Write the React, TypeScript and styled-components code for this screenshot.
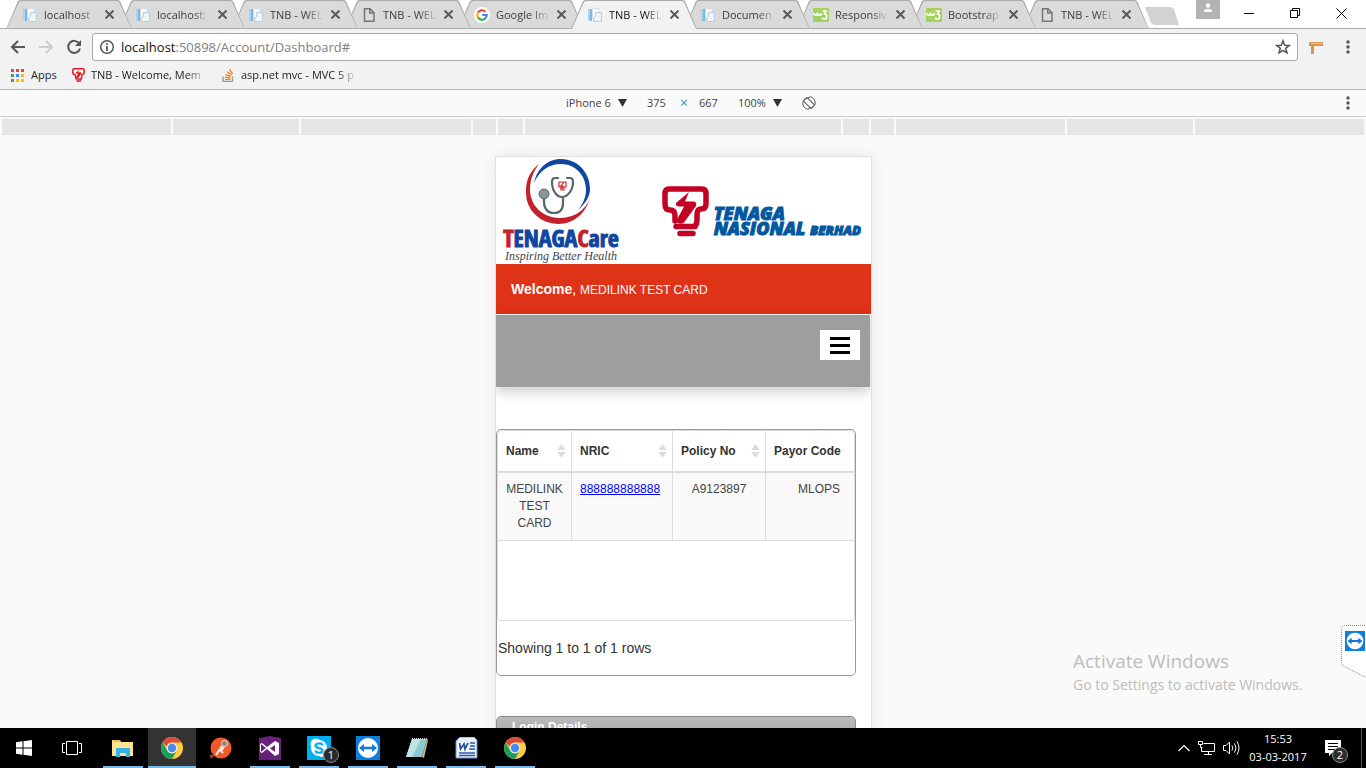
import React from "react";
import styled, { createGlobalStyle, css } from "styled-components";

const GlobalStyle = createGlobalStyle`
  * { box-sizing: border-box; }
  body { margin: 0; font-family: "Liberation Sans", Arial, sans-serif; overflow: hidden; }
  button, input, select { font: inherit; color: inherit; background: none; border: 0; padding: 0; margin: 0; }
  svg { display: block; flex: none; }
`;

const ui = `"Open Sans", "Noto Sans", sans-serif`;

const Desktop = styled.div`
  display: flex;
  flex-direction: column;
  height: 100vh;
  background: #fff;
  position: relative;
`;

/* ---------- tab strip ---------- */
const TabStrip = styled.header`
  display: flex;
  flex: none;
  height: 29px;
  padding-left: 19px;
  border-bottom: 1px solid #ababab;
  font: 12px/29px ${ui};
`;

const Tab = styled.div<{ $active?: boolean; $order: number }>`
  display: flex;
  align-items: center;
  gap: 6px;
  flex: 0 1 126px;
  min-width: 0;
  height: 29px;
  margin-left: -13px;
  padding: 0 18px 0 16px;
  position: relative;
  isolation: isolate;
  z-index: ${(p) => (p.$active ? 20 : 10 - p.$order)};
  color: ${(p) => (p.$active ? "#111" : "#3c3c3c")};
  &::before,
  &::after {
    content: "";
    position: absolute;
    inset: 0;
    z-index: -1;
    clip-path: polygon(0 100%, 12px 1px, 14px 0, calc(100% - 14px) 0, calc(100% - 12px) 1px, 100% 100%);
    background: #ababab;
  }
  &::after {
    inset: 1px 1px ${(p) => (p.$active ? "0" : "1px")} 1px;
    background: ${(p) => (p.$active ? "#f2f2f2" : "#dadada")};
  }
`;

const TabTitle = styled.button`
  flex: 1;
  min-width: 0;
  overflow: hidden;
  white-space: nowrap;
  text-align: left;
  font-size: 11px;
  line-height: 28px;
  mask-image: linear-gradient(to right, #000 36px, transparent 54px);
`;

const IconButton = styled.button<{ $w: number; $h?: number }>`
  display: flex;
  flex: none;
  align-items: center;
  justify-content: center;
  width: ${(p) => p.$w}px;
  height: ${(p) => p.$h ?? p.$w}px;
`;

const NewTab = styled.button`
  width: 34px;
  height: 18px;
  margin: 7px 0 0 -4px;
  background: #d2d2d2;
  clip-path: polygon(0 0, 26px 0, 29px 2px, 100% 100%, 9px 100%, 6px 16px);
`;

const WindowControls = styled.div`
  display: flex;
  margin-left: auto;
  padding-right: 2px;
`;

const Person = styled.button`
  display: flex;
  justify-content: center;
  width: 24px;
  height: 19px;
  margin-right: 6px;
  padding-top: 3px;
  background: #b3b3b3;
`;

/* ---------- address and bookmarks ---------- */
const Toolbar = styled.div`
  display: flex;
  align-items: center;
  flex: none;
  height: 36px;
  padding: 0 8px;
  background: #f2f2f2;
  color: #555;
`;

const Omnibox = styled.form`
  display: flex;
  align-items: center;
  flex: 1;
  height: 28px;
  margin: 0 8px;
  padding: 0 6px;
  gap: 6px;
  background: #fff;
  border: 1px solid #a9a9a9;
  border-radius: 3px;
`;

const Address = styled.span`
  flex: 1;
  font: 13px/20px ${ui};
  color: #808080;
  white-space: nowrap;
  b { font-weight: 400; color: #111; }
`;

const MenuButton = styled(IconButton)`
  margin-left: 12px;
`;

const Bookmarks = styled.nav`
  display: flex;
  flex: none;
  height: 25px;
  padding-left: 10px;
  background: #f2f2f2;
  border-bottom: 1px solid #b5b5b5;
`;

const Bookmark = styled.a<{ $w: number; $fade?: boolean }>`
  display: flex;
  align-items: center;
  gap: 6px;
  width: ${(p) => p.$w}px;
  height: 20px;
  color: #222;
  font: 11px/20px ${ui};
  text-decoration: none;
  white-space: nowrap;
  span {
    overflow: hidden;
    ${(p) => p.$fade && css`flex: 0 0 116px; mask-image: linear-gradient(to right, #000 96px, transparent);`}
  }
`;

/* ---------- device toolbar ---------- */
const DeviceBar = styled.div`
  display: grid;
  grid-template-columns: 1fr auto 1fr;
  align-items: center;
  flex: none;
  height: 27px;
  background: #fafafa;
  border-bottom: 1px solid #ccc;
  color: #444;
  font: 12px/26px ${ui};
`;

const DeviceControls = styled.div`
  display: flex;
  grid-column: 2;
  align-items: center;
  padding-left: 16px;
`;

const Picker = styled.label<{ $w: number }>`
  display: flex;
  align-items: center;
  width: ${(p) => p.$w}px;
  margin-right: 20px;
  font-size: 11px;
  select {
    flex: 1;
    min-width: 0;
    appearance: none;
  }
  &::after {
    content: "";
    width: 9px;
    height: 8px;
    background: #333;
    clip-path: polygon(0 0, 100% 0, 50% 100%);
  }
`;

const Dimension = styled.input`
  width: 22px;
  font-size: 11px;
`;

const Times = styled.span`
  width: 30px;
  text-align: center;
  color: #4a86c0;
  font-size: 14px;
`;

const Gap = styled.span`
  width: 17px;
`;

const KebabSlot = styled.div`
  display: flex;
  justify-content: flex-end;
  padding-right: 10px;
`;

const Ruler = styled.div`
  display: flex;
  flex: none;
  gap: 2px;
  height: 18px;
  padding: 2px 2px 0;
  background: #fafafa;
`;

const Mark = styled.div<{ $w?: number }>`
  ${(p) => (p.$w ? css`flex: none; width: ${p.$w}px;` : css`flex: 1;`)}
  background: #e5e5e5;
`;

/* ---------- emulated page ---------- */
const Stage = styled.main`
  display: flex;
  justify-content: center;
  flex: 1;
  min-height: 0;
  overflow: hidden;
  padding: 21px 0 0 1px;
  background: #fafafa;
`;

const Phone = styled.div`
  width: 377px;
  height: 669px;
  flex: none;
  overflow: hidden;
  background: #fff;
  border: 1px solid #e0e0e0;
  box-shadow: 0 0 16px rgba(0, 0, 0, 0.08);
`;

const BrandRow = styled.div`
  display: flex;
  justify-content: space-between;
  height: 107px;
  padding: 2px 10px 0 7px;
`;

const CareBrand = styled.div`
  display: flex;
  flex-direction: column;
  align-items: center;
  width: 116px;
  white-space: nowrap;
  > svg { margin-right: 4px; }
`;

const CareName = styled.div`
  color: #1146a0;
  font: 900 24px/25px "Open Sans Condensed", "Liberation Sans Narrow", "Liberation Sans", sans-serif;
  -webkit-text-stroke: 1px #1146a0;
  em { font-style: normal; color: #c4222a; -webkit-text-stroke-color: #c4222a; }
`;

const Tagline = styled.div`
  color: #444;
  font: italic 12px/13px "Liberation Serif", serif;
`;

const TnbBrand = styled.div`
  display: flex;
  gap: 5px;
  padding-top: 27px;
`;

const TnbName = styled.div`
  padding-top: 20px;
  color: #0058a0;
  font: italic 800 18px/15px "Open Sans", sans-serif;
  -webkit-text-stroke: 1px #0058a0;
  white-space: nowrap;
  small { font-size: 13px; }
`;

const Welcome = styled.div`
  height: 50px;
  padding: 0 15px;
  background: #df3317;
  color: #fff;
  font-size: 12px;
  line-height: 50px;
  b, span { font-size: 14px; }
`;

const MenuBar = styled.div`
  display: flex;
  justify-content: flex-end;
  align-items: flex-start;
  height: 72px;
  margin: 1px 1px 0 0;
  padding: 15px 10px;
  background: #9e9e9e;
  box-shadow: 0 4px 12px rgba(0, 0, 0, 0.22);
`;

const Burger = styled.button`
  display: flex;
  flex-direction: column;
  align-items: center;
  justify-content: center;
  gap: 4px;
  width: 40px;
  height: 30px;
  background: #fff;
  i { width: 20px; height: 3px; background: #000; }
`;

const Panel = styled.section`
  height: 247px;
  margin: 42px 15px 40px 0;
  border: 1px solid #999;
  border-radius: 5px;
`;

const TableFrame = styled.div`
  height: 191px;
  border: 1px solid #ddd;
  border-radius: 4px;
  overflow: hidden;
`;

const Grid = styled.table`
  width: 100%;
  table-layout: fixed;
  border-collapse: separate;
  border-spacing: 0;
  color: #444;
  font-size: 12px;
  line-height: 17px;
`;

const Cell = styled.td<{ $align?: string }>`
  height: 68px;
  padding: 8px 8px 6px;
  vertical-align: top;
  text-align: ${(p) => p.$align ?? "center"};
  background: #f9f9f9;
  border-bottom: 1px solid #ddd;
  &:not(:last-child) { border-right: 1px solid #ddd; }
  &:last-child { padding-right: 14px; }
  a { color: #00f; }
`;

const HeadCell = styled.th`
  height: 42px;
  padding: 0 5px 0 8px;
  text-align: left;
  color: #333;
  white-space: nowrap;
  border-bottom: 2px solid #ddd;
  &:not(:last-child) { border-right: 1px solid #ddd; }
  div { display: flex; align-items: center; justify-content: space-between; }
`;

const RowCount = styled.p`
  margin: 17px 0 0 1px;
  color: #333;
  font-size: 14px;
  line-height: 20px;
`;

const LoginHead = styled.h2`
  height: 36px;
  margin: 0 15px 0 0;
  padding: 0 15px;
  border: 1px solid #8a8a8a;
  border-radius: 5px 5px 0 0;
  background: linear-gradient(#bbb, #999 30px);
  color: #fff;
  font-size: 12px;
  line-height: 21px;
`;

/* ---------- overlays ---------- */
const Watermark = styled.aside`
  position: absolute;
  right: 57px;
  bottom: 72px;
  width: 236px;
  color: #bdbdbd;
  font: 14px/22px ${ui};
  white-space: nowrap;
  strong { display: block; font-weight: 400; font-size: 19px; line-height: 25px; }
`;

const SideTab = styled.button`
  position: absolute;
  right: 0;
  top: 625px;
`;

/* ---------- taskbar ---------- */
const Taskbar = styled.footer`
  display: flex;
  flex: none;
  height: 40px;
  background: #000;
  color: #fff;
`;

const Task = styled.button<{ $state?: "open" | "active" }>`
  display: flex;
  align-items: center;
  justify-content: center;
  position: relative;
  width: 48px;
  height: 40px;
  margin-right: 1px;
  background: ${(p) => (p.$state === "active" ? "#333" : "#000")};
  ${(p) =>
    p.$state &&
    css`
      &::after {
        content: "";
        position: absolute;
        bottom: 0;
        left: ${p.$state === "active" ? 0 : 4}px;
        right: ${p.$state === "active" ? 0 : 4}px;
        height: 2px;
        background: #76b9ed;
      }
    `}
`;

const SystemButtons = styled.div`
  display: flex;
  width: 99px;
  ${Task} { margin: 0; }
`;

const Badge = styled.span<{ $right: number }>`
  position: absolute;
  right: ${(p) => p.$right}px;
  bottom: 5px;
  width: 16px;
  height: 16px;
  border: 1px solid #8c8c8c;
  border-radius: 8px;
  background: #2b2b2b;
  font: 11px/14px ${ui};
  text-align: center;
`;

const Tray = styled.div`
  display: flex;
  align-items: center;
  margin-left: auto;
  > svg { margin-right: 8px; }
`;

const Clock = styled.time`
  font: 11px/18px ${ui};
  text-align: center;
  width: 60px;
  white-space: nowrap;
`;

const Notifications = styled(Task)`
  width: 54px;
  margin-right: 4px;
  padding-right: 3px;
  border-right: 1px solid #555;
`;

/* ---------- drawings ---------- */
const DocsIcon = () => (
  <svg width="16" height="16" viewBox="0 0 16 16">
    <path d="M1 2h4v12H1z" fill="#7ab8e0" /><path d="M1 2h2v12H1z" fill="#a9d3ee" />
    <path d="M5.500 1.500h6.500v10H5.500z" fill="#f6f8fb" stroke="#d5dce5" />
    <path d="M8.500 5.500h6v9h-8v-4h2z" fill="#e9eef5" stroke="#c3ccd8" />
    <path d="M9.500 8h4M8 10.500h5.500M8 12.500h5" stroke="#fff" />
  </svg>
);
const PageIcon = () => (
  <svg width="16" height="16" viewBox="0 0 16 16" fill="none" stroke="#757575" strokeWidth="1.500">
    <path d="M3.500 1.800h5.500l4 4v8.400H3.500z" /><path d="M8.800 2v4h4" />
  </svg>
);
const GoogleIcon = () => (
  <svg width="16" height="16" viewBox="0 0 16 16" fill="none" strokeWidth="2.200">
    <circle cx="8" cy="8" r="8" fill="#fff" />
    <path d="M11.400 4.700A4.800 4.800 0 0 0 3.800 5.700" stroke="#ea4335" />
    <path d="M3.800 5.700a4.800 4.800 0 0 0 0 4.600" stroke="#fbbc05" />
    <path d="M3.800 10.300a4.800 4.800 0 0 0 7.300 1.300" stroke="#34a853" />
    <path d="M11.100 11.600A4.800 4.800 0 0 0 12.700 8H8.200" stroke="#4285f4" />
  </svg>
);
const W3Icon = () => (
  <svg width="16" height="16" viewBox="0 0 16 16" fill="none" stroke="#fff" strokeWidth="1.600" strokeLinejoin="round">
    <rect width="16" height="14" y="1" rx="1" fill="#a4d15f" stroke="none" />
    <path d="M1 6c0 3 3 3 3.500 0 .5 3 3.500 3 4 0" />
    <path d="M9.500 4h4l-2.200 3c3.200 0 3.200 5 0 5-1 0-1.800-.5-2-1.300" />
  </svg>
);
const Bulb = ({ w, h, color = "#c40024" }: { w: number; h: number; color?: string }) => (
  <svg width={w} height={h} viewBox="0 0 47 51">
    <path d="M33 40q2-2 2-6v-5q0-6 4-6 5 0 5-5V8q0-5-4-5H7Q3 3 3 8v10q0 6 5 6 5 0 5 6v5" fill="#fff" stroke={color} strokeWidth="5.500" strokeLinecap="round" />
    <path d="M27 6 14 17q-1 3 3 3.500h5l-8 15q4 4 8 1L34 20q1-4-2-4.500h-9z" fill={color} />
    <path d="M14 40.500h19M18 47.500h13" stroke={color} strokeWidth="5.500" strokeLinecap="round" />
  </svg>
);
const CareEmblem = () => (
  <svg width="68" height="66" viewBox="0 0 68 66">
    <path d="M14 5A34 34 0 0 0 1 33a32 31 0 0 0 32 32c17 0 31-13 33-32a31 27 0 0 1-31 26C18 59 5 47 5 30c0-9 3-17 9-25z" fill="#c4222a" />
    <path d="M9 24C12 10 22 0 36 0c17 0 29 14 29 30 0 8-5 15-12 21 5-6 8-13 8-20C61 16 50 5 36 5 24 5 14 12 9 24z" fill="#1146a0" />
    <path d="M33 19h-3q-3 0-3 4c0 9 5 15 10 15s11-6 11-15q0-4-3-4h-3M38 38v6c0 6-3 10-9 10s-10-4-10-11v-3" fill="none" stroke="#56686c" strokeWidth="2.200" strokeLinecap="round" />
    <circle cx="19" cy="35" r="5" fill="#8b9496" stroke="#56686c" />
    <path d="M34 23h7v5h-2v3h-3v-3h-2zM39 23l-3 4h2l-1 3" fill="#fff" stroke="#d42632" strokeWidth="1.200" />
  </svg>
);
const CloseX = ({ size = 9, w = 2, color = "#5a5a5a" }) => (
  <svg width={size} height={size} viewBox={`0 0 ${size} ${size}`} stroke={color} strokeWidth={w}>
    <path d={`M.5.5 ${size - 0.5} ${size - 0.5}M${size - 0.5}.5.5 ${size - 0.5}`} />
  </svg>
);
const Kebab = () => (
  <svg width="4" height="14" fill="#555"><circle cx="2" cy="2" r="1.700" /><circle cx="2" cy="7" r="1.700" /><circle cx="2" cy="12" r="1.700" /></svg>
);
const SortIcon = () => (
  <svg width="9" height="16" fill="#dcdcdc"><path d="M4.500 1 8.800 7H.2zM.2 9h8.600L4.500 15z" /></svg>
);
const Chrome = () => (
  <svg width="22" height="22" viewBox="0 0 22 22">
    <circle cx="11" cy="11" r="11" fill="#ffcd40" />
    <path d="M1.500 5.500A11 11 0 0 1 20.500 5.500H11a5.500 5.500 0 0 0-5.300 4z" fill="#dd4b3e" />
    <path d="M1.500 5.500A11 11 0 0 0 11 22l4.700-8.200A5.500 5.500 0 0 1 6.300 13.800z" fill="#19a05e" />
    <circle cx="11" cy="11" r="5.300" fill="#f1f1f1" /><circle cx="11" cy="11" r="4.200" fill="#4989f4" />
  </svg>
);
const TeamViewer = ({ size = 24 }) => (
  <svg width={size} height={size} viewBox="0 0 24 24">
    <path d="M0 0h24v24H0z" fill="#0e7fe0" /><circle cx="12" cy="12" r="10" fill="#fff" />
    <path d="m3 12 5-4v2.700h8V8l5 4-5 4v-2.700H8V16z" fill="#1277d6" />
  </svg>
);
const StackIcon = () => (
  <svg width="13" height="14" viewBox="0 0 13 14" fill="none" strokeWidth="1.300">
    <path d="M1 8.500v4.800h9.500V8.500" stroke="#999" />
    <path d="M3 11.300h5.500M3 9.200l5.500.6M3.500 6.600l5.300 1.700M5 3.800l4.600 3.100M7.500 1.300l3.200 4.500" stroke="#f48024" />
  </svg>
);

const pages = [
  ["localhost", DocsIcon], ["localhost:", DocsIcon], ["TNB - WEL", DocsIcon], ["TNB - WEL", PageIcon],
  ["Google Im", GoogleIcon], ["TNB - WEL", DocsIcon], ["Documen", DocsIcon], ["Responsiv", W3Icon],
  ["Bootstrap", W3Icon], ["TNB - WEL", PageIcon],
] as const;

const appColors = ["#ea4335", "#ea4335", "#ea4335", "#34a853", "#4285f4", "#fbbc05", "#34a853", "#fbbc05", "#fbbc05"];
const rulerMarks = [0, 126, 170, 23, 25, 316, 26, 23, 169, 126, 0];

export default function App() {
  return (
    <Desktop>
      <GlobalStyle />
      <TabStrip>
        {pages.map(([title, Icon], i) => (
          <Tab key={i} $order={i} $active={i === 5}>
            <Icon />
            <TabTitle>{title}</TabTitle>
            <IconButton $w={10} aria-label="Close tab"><CloseX /></IconButton>
          </Tab>
        ))}
        <NewTab aria-label="New tab" />
        <WindowControls>
          <Person aria-label="Profile">
            <svg width="10" height="10" fill="#fff"><circle cx="5" cy="2.500" r="2.200" /><path d="M1 9V7.500Q1 6 5 6t4 1.500V9z" /></svg>
          </Person>
          <IconButton $w={46} $h={26} aria-label="Minimize"><svg width="10" height="1"><path d="M0 0h10v1H0z" /></svg></IconButton>
          <IconButton $w={46} $h={26} aria-label="Restore">
            <svg width="10" height="10" fill="none" stroke="#000"><path d="M.5 2.500h7v7h-7zM2.500 2.500v-2h7v7h-2" /></svg>
          </IconButton>
          <IconButton $w={46} $h={26} aria-label="Close"><CloseX size={11} w={1} color="#000" /></IconButton>
        </WindowControls>
      </TabStrip>

      <Toolbar>
        <IconButton $w={20} aria-label="Back"><svg width="16" height="14" fill="none" stroke="#555" strokeWidth="2"><path d="M15 7H2.500M8 1 2 7l6 6" /></svg></IconButton>
        <IconButton $w={36} $h={20} aria-label="Forward"><svg width="16" height="14" fill="none" stroke="#ccc" strokeWidth="2"><path d="M1 7h12.500M8 1l6 6-6 6" /></svg></IconButton>
        <IconButton $w={20} aria-label="Reload">
          <svg width="16" height="16" fill="none" stroke="#555" strokeWidth="2"><path d="M13.200 4.500A6 6 0 1 0 14 9.500" /><path d="M15 1v6H9z" fill="#555" stroke="none" /></svg>
        </IconButton>
        <Omnibox>
          <svg width="16" height="16" fill="none" stroke="#555" strokeWidth="1.500"><circle cx="8" cy="8" r="6.300" /><path d="M8 7v5M8 4v1.700" strokeWidth="1.800" /></svg>
          <Address><b>localhost</b>:50898/Account/Dashboard#</Address>
          <svg width="16" height="16" fill="none" stroke="#555" strokeWidth="1.500"><path d="m8 1.800 1.700 4.400 4.700.2-3.700 2.900 1.300 4.600L8 11.300l-4 2.600 1.300-4.600-3.700-2.900 4.700-.2z" /></svg>
        </Omnibox>
        <IconButton $w={20} aria-label="Extension">
          <svg width="14" height="13"><path d="M1 1h13v4H5v8H2V5H0V2z" fill="#dc9450" /><path d="M2 2.500h11" stroke="#f3c797" /></svg>
        </IconButton>
        <MenuButton $w={20} aria-label="Menu"><Kebab /></MenuButton>
      </Toolbar>

      <Bookmarks>
        <Bookmark href="#apps" $w={62}>
          <svg width="15" height="14">{appColors.map((c, i) => <rect key={i} x={1 + (i % 3) * 5} y={1 + Math.floor(i / 3) * 5} width="3" height="3" fill={c} />)}</svg>
          <span>Apps</span>
        </Bookmark>
        <Bookmark href="#tnb" $w={150} $fade><Bulb w={13} h={14} color="#e3131f" /><span>TNB - Welcome, Mem</span></Bookmark>
        <Bookmark href="#mvc" $w={140} $fade><StackIcon /><span>asp.net mvc - MVC 5 p</span></Bookmark>
      </Bookmarks>

      <DeviceBar>
        <DeviceControls>
          <Picker $w={61}><select aria-label="Device"><option>iPhone 6</option></select></Picker>
          <Dimension aria-label="Width" defaultValue="375" />
          <Times>×</Times>
          <Dimension aria-label="Height" defaultValue="667" />
          <Gap />
          <Picker $w={44}><select aria-label="Zoom"><option>100%</option></select></Picker>
          <IconButton $w={14} aria-label="Rotate">
            <svg width="14" height="14" fill="none" stroke="#555"><rect x="4.500" y="1.500" width="5" height="11" rx="1" transform="rotate(-45 7 7)" /><path d="M8.500.7A6.500 6.500 0 0 1 13 8.500L11 11M5.500 13.300A6.500 6.500 0 0 1 1 5.500L3 3M8.500.7 3.500 3M5.500 13.300l5-2.300" /></svg>
          </IconButton>
        </DeviceControls>
        <KebabSlot><IconButton $w={16} aria-label="Device options"><Kebab /></IconButton></KebabSlot>
      </DeviceBar>
      <Ruler>{rulerMarks.map((w, i) => <Mark key={i} $w={w} />)}</Ruler>

      <Stage>
        <Phone>
          <BrandRow>
            <CareBrand>
              <CareEmblem />
              <CareName><em>T</em>ENAGA<em>C</em>are</CareName>
              <Tagline>Inspiring Better Health</Tagline>
            </CareBrand>
            <TnbBrand>
              <Bulb w={47} h={51} />
              <TnbName>TENAGA<br />NASIONAL <small>BERHAD</small></TnbName>
            </TnbBrand>
          </BrandRow>
          <Welcome><b>Welcome</b><span>, </span>MEDILINK TEST CARD</Welcome>
          <MenuBar><Burger aria-label="Open menu"><i /><i /><i /></Burger></MenuBar>
          <Panel>
            <TableFrame>
              <Grid>
                <colgroup><col width="74" /><col width="101" /><col width="93" /><col /></colgroup>
                <thead>
                  <tr>
                    <HeadCell><div>Name<SortIcon /></div></HeadCell>
                    <HeadCell><div>NRIC<SortIcon /></div></HeadCell>
                    <HeadCell><div>Policy No<SortIcon /></div></HeadCell>
                    <HeadCell>Payor Code</HeadCell>
                  </tr>
                </thead>
                <tbody>
                  <tr>
                    <Cell>MEDILINK TEST CARD</Cell>
                    <Cell $align="left"><a href="#nric">888888888888</a></Cell>
                    <Cell>A9123897</Cell>
                    <Cell $align="right">MLOPS</Cell>
                  </tr>
                </tbody>
              </Grid>
            </TableFrame>
            <RowCount>Showing 1 to 1 of 1 rows</RowCount>
          </Panel>
          <LoginHead>Login Details</LoginHead>
        </Phone>
      </Stage>

      <Watermark><strong>Activate Windows</strong>Go to Settings to activate Windows.</Watermark>
      <SideTab aria-label="TeamViewer">
        <svg width="25" height="53"><path d="M26 .5H5Q.5.500.5 5v31q0 4 4 6L26 53" fill="#fff" stroke="#888" strokeDasharray="1 1" /><g transform="translate(4 6)"><TeamViewer size={20} /></g></svg>
      </SideTab>

      <Taskbar>
        <SystemButtons>
          <Task aria-label="Start"><svg width="16" height="16" fill="#fff"><path d="M0 2.300 6.500 1.300V7.500H0zM7.500 1.200 16 0v7.500H7.500zM0 8.500h6.500v6.200L0 13.700zM7.500 8.500H16V16l-8.500-1.200z" /></svg></Task>
          <Task aria-label="Task view"><svg width="20" height="14" fill="none" stroke="#fff"><path d="M4.500.5h11v13h-11zM3 2.500H.5v9H3M17 2.500h2.500v9H17" /></svg></Task>
        </SystemButtons>
        <Task $state="open" aria-label="File Explorer">
          <svg width="22" height="19"><path d="M0 1h8l1 2h12v14H0z" fill="#ffe493" /><path d="M1 1h7v2H1z" fill="#f5c33b" /><path d="M4 9h14v9h-4v-4H8v4H4z" fill="#35b2e8" /></svg>
        </Task>
        <Task $state="active" aria-label="Chrome"><Chrome /></Task>
        <Task aria-label="Postman">
          <svg width="22" height="22"><circle cx="11" cy="11" r="10.500" fill="#f05a28" /><path d="M0 18h4l-3 4z" fill="#d9421c" /><circle cx="14.500" cy="6.500" r="3" fill="#8b8580" stroke="#f4e6df" /><path d="m12 9-6 9M14 10l-3 4 2 2" stroke="#f9ede6" strokeWidth="2" fill="none" /></svg>
        </Task>
        <Task $state="open" aria-label="Visual Studio">
          <svg width="22" height="24"><path d="M0 2 11 0l11 2v22H0z" fill="#68217a" /><path d="m2 8 5 4-5 4zM16 5l4 2v11l-4 2-8-7-5 4-2-1V8l2-1 5 4zM16 9l-5 3.500 5 3.500z" fill="#fff" fillRule="evenodd" /></svg>
        </Task>
        <Task $state="open" aria-label="Skype">
          <svg width="24" height="24"><path d="M0 0h24v24H0z" fill="#00aff0" /><circle cx="9" cy="8" r="5.500" fill="#fff" /><circle cx="12" cy="12" r="8" fill="#fff" /><circle cx="15" cy="16" r="5" fill="#fff" /><path d="M15.500 9.500C15 6.500 8.500 7 8.500 9.800c0 3 7 1.500 7 4.700 0 3-6.500 3-7.200 0" fill="none" stroke="#00aff0" strokeWidth="2.200" /></svg>
          <Badge $right={4}>1</Badge>
        </Task>
        <Task $state="open" aria-label="TeamViewer"><TeamViewer /></Task>
        <Task $state="open" aria-label="Notepad">
          <svg width="24" height="22"><path d="M7 2h15l-5 18H1z" fill="#8fc7cf" /><path d="M7 2h9L7 20H1z" fill="#bfe3e6" /><path d="m22 2 1 1-4 18-2-1z" fill="#c9b88b" /><path d="M7 2h15" stroke="#ddd" strokeWidth="2" strokeDasharray="1 1" /></svg>
        </Task>
        <Task $state="open" aria-label="Word">
          <svg width="23" height="22"><path d="M5 0h14l3 3v18H1V4z" fill="#e8eefa" stroke="#6f8fd0" /><path d="M15 6h5M15 9h5M14 12h6M4 16h16M4 18.500h16" stroke="#2f5ba9" strokeWidth="1.400" /><path d="M3 5h11v9H3z" fill="#fff" /><path d="m4.500 6 1 6L9 7l1 5 3-6" stroke="#2b4f9a" fill="none" strokeWidth="1.800" /></svg>
        </Task>
        <Task $state="open" aria-label="Chrome"><Chrome /></Task>
        <Tray>
          <svg width="12" height="8" fill="none" stroke="#fff" strokeWidth="1.200"><path d="M.5 7 6 1.500 11.500 7" /></svg>
          <svg width="17" height="14" fill="none" stroke="#fff"><path d="M5.500 2.500h11v8H3.500V6M10.500 10.500v3M6 13.500h8M.5.5h4v3h-4zM2.500 3.500v3h2" /></svg>
          <svg width="17" height="14" fill="none" stroke="#fff"><path d="M.5 4.500H3L6.500 1v12L3 9.500H.5zM9 4.500q1.500 2.500 0 5M11.500 2.500q3 4.500 0 9M14 .5q4 6.500 0 13" /></svg>
          <Clock>15:53<br />03-03-2017</Clock>
          <Notifications aria-label="Notifications">
            <svg width="16" height="17"><path d="M0 0h16v13H7l-3 3v-3H0z" fill="#fff" /><path d="M3 3.500h10M3 6.500h10M3 9.500h7" stroke="#000" /></svg>
            <Badge $right={13}>2</Badge>
          </Notifications>
        </Tray>
      </Taskbar>
    </Desktop>
  );
}
